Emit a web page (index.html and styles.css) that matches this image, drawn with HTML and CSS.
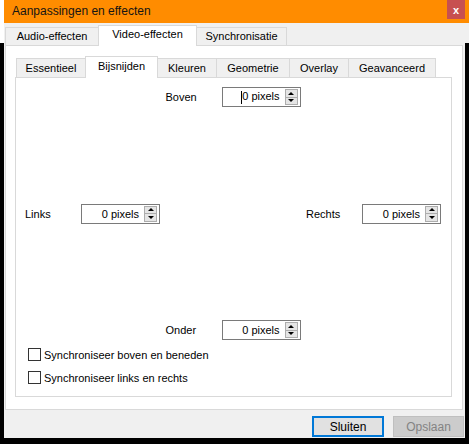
FILE: index.html
```html
<!DOCTYPE html>
<html>

<head>
  <title>Aanpassingen en effecten</title>
  <link rel="stylesheet" href="styles.css">
</head>

<body>
  <div class="window">
    <div class="titlebar">
      <span class="title">Aanpassingen en effecten</span>
      <span class="close">x</span>
    </div>

    <div class="tabs main-tabs">
      <div class="tab">Audio-effecten</div>
      <div class="tab on">Video-effecten</div>
      <div class="tab">Synchronisatie</div>
    </div>

    <div class="panel">
      <div class="tabs sub">
        <div class="tab">Essentieel</div>
        <div class="tab on">Bijsnijden</div>
        <div class="tab">Kleuren</div>
        <div class="tab">Geometrie</div>
        <div class="tab">Overlay</div>
        <div class="tab">Geavanceerd</div>
      </div>

      <div class="crop">
        <div class="field">
          <label>Boven</label>
          <div class="spin">
            <span class="val"><span class="caret"></span>0 pixels</span>
            <span class="arrows"><i class="up"></i><i class="down"></i></span>
          </div>
        </div>

        <div class="middle">
          <div class="field">
            <label>Links</label>
            <div class="spin">
              <span class="val">0 pixels</span>
              <span class="arrows"><i class="up"></i><i class="down"></i></span>
            </div>
          </div>
          <div class="field">
            <label>Rechts</label>
            <div class="spin">
              <span class="val">0 pixels</span>
              <span class="arrows"><i class="up"></i><i class="down"></i></span>
            </div>
          </div>
        </div>

        <div class="field last">
          <label>Onder</label>
          <div class="spin">
            <span class="val">0 pixels</span>
            <span class="arrows"><i class="up"></i><i class="down"></i></span>
          </div>
        </div>

        <div class="check"><span class="box"></span>Synchroniseer boven en beneden</div>
        <div class="check"><span class="box"></span>Synchroniseer links en rechts</div>
      </div>
    </div>

    <div class="footer">
      <button class="btn focus">Sluiten</button>
      <button class="btn" disabled>Opslaan</button>
    </div>
  </div>
</body>

</html>
```

FILE: styles.css
```css
* {
  box-sizing: border-box;
}

body {
  margin: 0;
  width: 469px;
  height: 444px;
  overflow: hidden;
  background: linear-gradient(to right, #fff 4px, #f0f0f0 4px) 0 0 / 100% 43px no-repeat, #000;
  font-family: "Liberation Sans", Arial, sans-serif;
  font-size: 11px;
  color: #000;
}

.window {
  margin-left: 4px;
  width: 461px;
  height: 438px;
  background: #f0f0f0;
  display: flex;
  flex-direction: column;
}

.titlebar {
  height: 23px;
  margin-right: -4px;
  background: #ff8c00;
  display: flex;
  align-items: flex-start;
}

.title {
  flex: 1;
  padding: 4px 0 0 8px;
  font-size: 12px;
  color: #141414;
}

.close {
  width: 18px;
  height: 19px;
  margin-right: 4px;
  background: #c75050;
  color: #fff;
  font-weight: bold;
  font-size: 11px;
  display: flex;
  align-items: center;
  justify-content: center;
}

/* tab strips */
.tabs {
  display: flex;
  align-items: flex-start;
  height: 20px;
  margin-top: 2px;
  padding-left: 1px;
}

.tab {
  height: 18px;
  margin-top: 2px;
  margin-right: -1px;
  border: 1px solid #d9d9d9;
  border-bottom: none;
  background: #f0f0f0;
  line-height: 17px;
  text-align: center;
  white-space: nowrap;
}

.tab.on {
  position: relative;
  z-index: 1;
  height: 21px;
  margin-top: 0;
  background: #fff;
}

.main-tabs .tab:nth-child(1) { width: 94px; }
.main-tabs .tab:nth-child(2) { width: 99px; }
.main-tabs .tab:nth-child(3) { width: 91px; }

.panel {
  height: 365px;
  margin: 0 2px 0 1px;
  padding: 10px 10px 13px 9px;
  border: 1px solid #d9d9d9;
  background: #fff;
}

.sub {
  height: 21px;
  margin-top: 0;
}

.sub .tab {
  height: 19px;
  line-height: 18px;
}

.sub .tab.on {
  height: 22px;
  line-height: 19px;
}

.sub .tab:nth-child(1) { width: 70px; }
.sub .tab:nth-child(2) { width: 73px; }
.sub .tab:nth-child(3) { width: 60px; }
.sub .tab:nth-child(4) { width: 74px; }
.sub .tab:nth-child(5) { width: 60px; }
.sub .tab:nth-child(6) { width: 88px; }

/* crop page */
.crop {
  height: 320px;
  padding: 9px 10px 7px 9px;
  border: 1px solid #d9d9d9;
  display: flex;
  flex-direction: column;
}

.field {
  display: flex;
  align-items: center;
  align-self: center;
  height: 20px;
}

.field.last {
  margin-bottom: 3px;
}

.field label {
  width: 56px;
}

.middle {
  flex: 1;
  display: flex;
  align-items: center;
  justify-content: space-between;
}

.spin {
  width: 79px;
  height: 20px;
  border: 1px solid #7a7a7a;
  display: flex;
  align-items: center;
}

.val {
  flex: 1;
  text-align: right;
  padding-right: 5px;
  white-space: nowrap;
}

.caret {
  display: inline-block;
  width: 1px;
  height: 13px;
  background: #000;
  vertical-align: middle;
}

.arrows {
  width: 13px;
  height: 16px;
  margin-right: 2px;
  border: 1px solid #adadad;
  background: #e5e5e5;
  display: flex;
  flex-direction: column;
}

.arrows i {
  flex: 1;
  display: flex;
  align-items: center;
  justify-content: center;
}

.arrows i.up {
  border-bottom: 1px solid #adadad;
}

.arrows i::before {
  content: "";
  border-left: 3px solid transparent;
  border-right: 3px solid transparent;
}

.up::before {
  border-bottom: 3px solid #000;
}

.down::before {
  border-top: 3px solid #000;
}

.check {
  height: 23px;
  display: flex;
  align-items: center;
  padding-left: 3px;
}

.box {
  width: 13px;
  height: 13px;
  margin-right: 3px;
  border: 1px solid #333;
  background: #fff;
}

.footer {
  flex: 1;
  display: flex;
  justify-content: flex-end;
  align-items: flex-start;
  gap: 9px;
  padding: 6px 1px 0 0;
}

.btn {
  width: 72px;
  height: 21px;
  padding: 0;
  border: 1px solid #adadad;
  background: #e1e1e1;
  font: inherit;
  font-size: 12px;
  color: #000;
}

.btn.focus {
  border: 2px solid #0078d7;
}

.btn:disabled {
  width: 71px;
  background: #cccccc;
  border-color: #bfbfbf;
  color: #838383;
}
```
